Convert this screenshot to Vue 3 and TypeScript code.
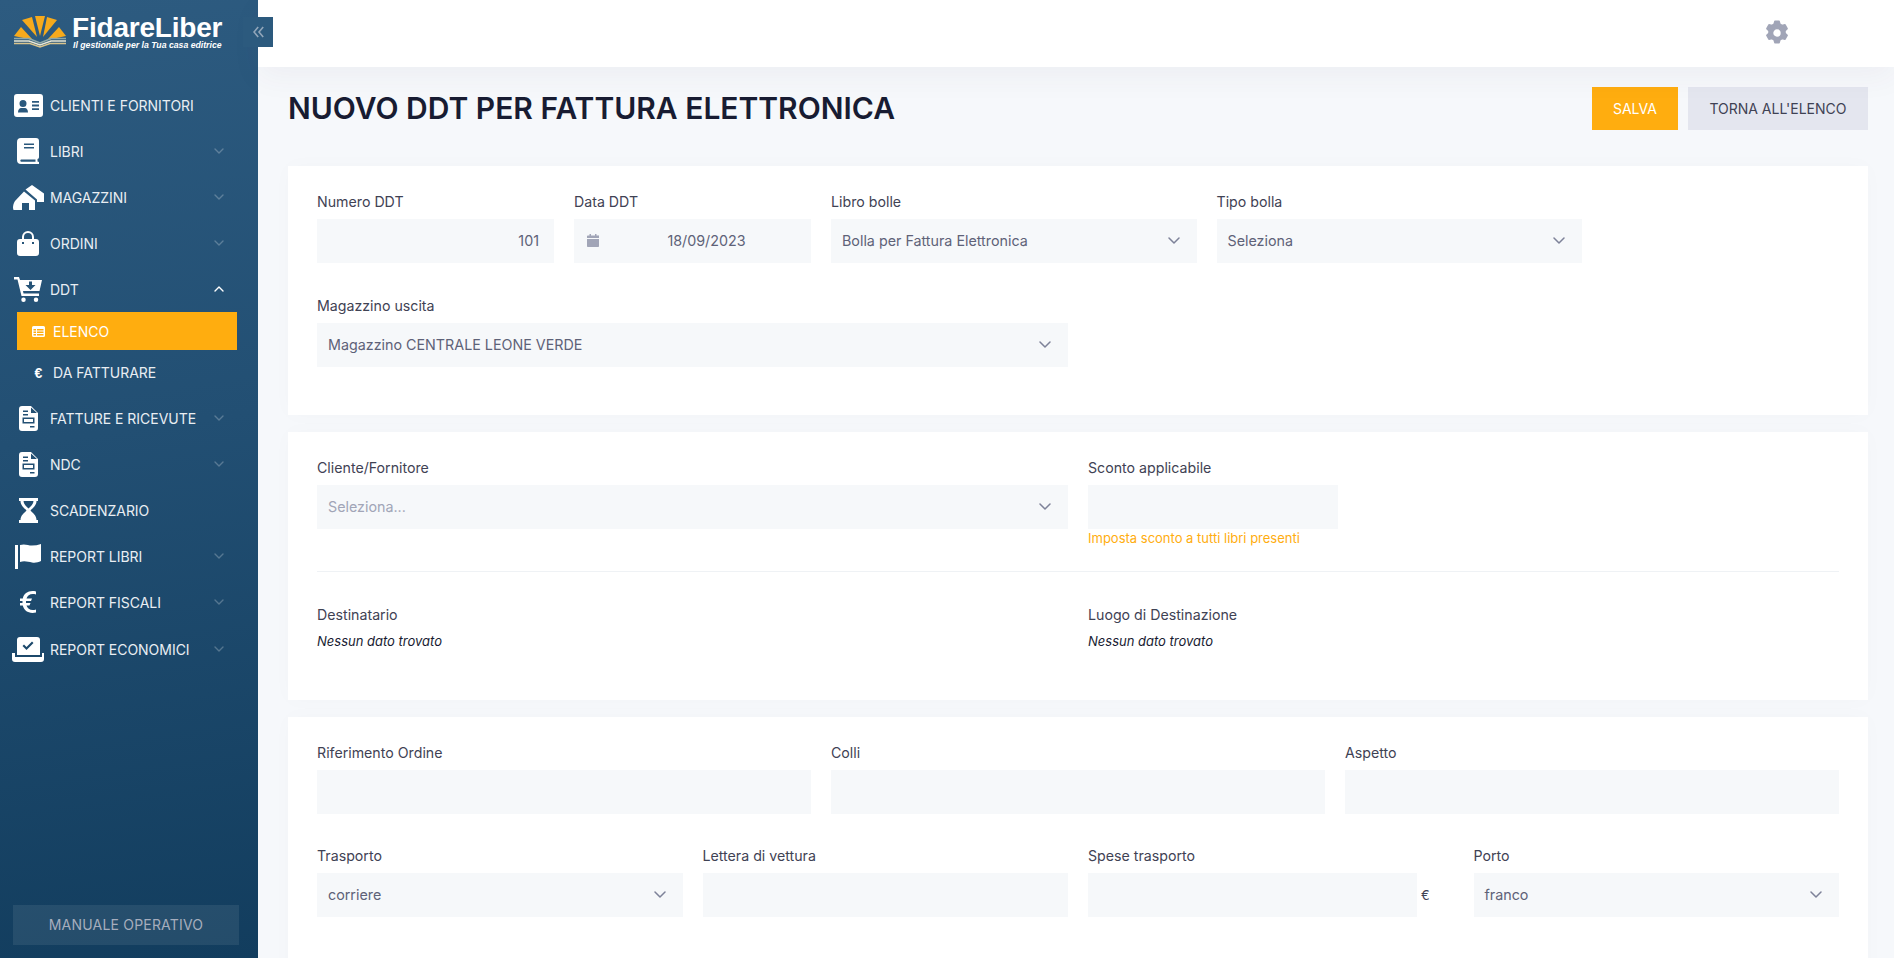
<template>
  <div class="layout">
    <aside class="aside">
      <div class="brand">
        <svg class="brand-mark" width="56" height="36" viewBox="13 14 56 36">
          <polygon points="35,16 45,16 40,36" fill="#f6aa1c" />
          <polygon points="22,20 32,17 37,37" fill="#f6aa1c" />
          <polygon points="47,17 57,20 43,37" fill="#f6aa1c" />
          <polygon points="14,36 21,27 33,40" fill="#f6aa1c" />
          <polygon points="59,27 66,36 47,40" fill="#f6aa1c" />
          <path d="M14 38.5H29L40 43L51 38.5H66" fill="none" stroke="#8fa9a8" stroke-width="1.6" />
          <path d="M14 41H29L40 45L51 41H66" fill="none" stroke="#e8e6d4" stroke-width="1.6" />
          <path d="M14 43.5H30L40 47L50 43.5H66" fill="none" stroke="#d9c48c" stroke-width="1.6" />
        </svg>
        <div class="brand-text">
          <div class="brand-name">FidareLiber</div>
          <div class="brand-sub">Il gestionale per la Tua casa editrice</div>
        </div>
      </div>

      <nav class="menu">
        <template v-for="item in menu" :key="item.label">
          <div class="menu-row">
            <span class="menu-icon">
              <svg :width="item.w" :height="item.h" :viewBox="`0 0 ${item.w} ${item.h}`">
                <path :d="item.d" fill="#fff" fill-rule="evenodd" />
              </svg>
            </span>
            <span class="menu-label">{{ item.label }}</span>
            <svg v-if="item.arrow" class="menu-arrow" :class="{ open: item.open }" width="10" height="6" viewBox="0 0 10 6">
              <path d="M1 1l4 4 4-4" fill="none" stroke="currentColor" stroke-width="1.4" stroke-linecap="round" stroke-linejoin="round" />
            </svg>
          </div>
          <template v-if="item.open">
            <div class="sub-row active">
              <svg width="13" height="11" viewBox="0 0 13 11">
                <path fill="#fff" fill-rule="evenodd" d="M1.5 0h10A1.5 1.5 0 0 1 13 1.5v8a1.5 1.5 0 0 1-1.5 1.5h-10A1.5 1.5 0 0 1 0 9.5v-8A1.5 1.5 0 0 1 1.5 0zM1.5 3v1.5h2.5V3zM5 3v1.5h6.5V3zM1.5 5.5V7h2.5V5.5zM5 5.5V7h6.5V5.5zM1.5 8v1.5h2.5V8zM5 8v1.5h6.5V8z" />
              </svg>
              <span>ELENCO</span>
            </div>
            <div class="sub-row second">
              <span class="euro-small">€</span>
              <span>DA FATTURARE</span>
            </div>
          </template>
        </template>
      </nav>

      <div class="manual">MANUALE OPERATIVO</div>
    </aside>

    <div class="main">
      <header class="topbar">
        <button class="collapse">
          <svg width="11" height="12" viewBox="0 0 11 12">
            <path d="M5.2 1L1 6l4.2 5M10.2 1L6 6l4.2 5" fill="none" stroke="#92a6ba" stroke-width="1.6" />
          </svg>
        </button>
        <svg class="gear" width="24" height="26" viewBox="0 0 24 26">
          <path fill="#a1a5b7" stroke="#a1a5b7" stroke-width="1.6" stroke-linejoin="round" fill-rule="evenodd" d="M9.9 1.4h4.2l.8 2.9 2.2 1.2 2.9-.7 2.1 3.8-2.1 2.1v2.6l2.1 2.1-2.1 3.8-2.9-.7-2.2 1.2-.8 2.9H9.9l-.8-2.9-2.2-1.2-2.9.7-2.1-3.8 2.1-2.1v-2.6L1.9 8.6 4 4.8l2.9.7 2.2-1.2zM12 8.5a4.5 4.5 0 1 0 0 9 4.5 4.5 0 0 0 0-9z" />
        </svg>
      </header>

      <main class="content">
        <div class="page-head">
          <h1>NUOVO DDT PER FATTURA ELETTRONICA</h1>
          <div class="actions">
            <button class="btn btn-save">SALVA</button>
            <button class="btn btn-back">TORNA ALL'ELENCO</button>
          </div>
        </div>

        <section class="card card-a">
          <div class="grid">
            <div class="field c2">
              <label>Numero DDT</label>
              <input class="input right" value="101" />
            </div>
            <div class="field c2">
              <label>Data DDT</label>
              <div class="input date">
                <svg width="12" height="13" viewBox="0 0 12 13">
                  <path fill="#a1a5b7" d="M2.5 0h1.5v1.5h4V0h1.5v1.5h1.2A.8.8 0 0 1 12 2.3V4H0V2.3a.8.8 0 0 1 .8-.8h1.7zM0 5h12v7.2a.8.8 0 0 1-.8.8H.8a.8.8 0 0 1-.8-.8z" />
                </svg>
                <span>18/09/2023</span>
              </div>
            </div>
            <div class="field c3">
              <label>Libro bolle</label>
              <div class="input select">
                <span>Bolla per Fattura Elettronica</span>
                <svg class="chev" width="12" height="7" viewBox="0 0 12 7"><path d="M1 1l5 5 5-5" /></svg>
              </div>
            </div>
            <div class="field c3">
              <label>Tipo bolla</label>
              <div class="input select">
                <span>Seleziona</span>
                <svg class="chev" width="12" height="7" viewBox="0 0 12 7"><path d="M1 1l5 5 5-5" /></svg>
              </div>
            </div>
            <div class="field c6">
              <label>Magazzino uscita</label>
              <div class="input select">
                <span>Magazzino CENTRALE LEONE VERDE</span>
                <svg class="chev" width="12" height="7" viewBox="0 0 12 7"><path d="M1 1l5 5 5-5" /></svg>
              </div>
            </div>
          </div>
        </section>

        <section class="card card-b">
          <div class="grid">
            <div class="field c6">
              <label>Cliente/Fornitore</label>
              <div class="input select placeholder">
                <span>Seleziona...</span>
                <svg class="chev" width="12" height="7" viewBox="0 0 12 7"><path d="M1 1l5 5 5-5" /></svg>
              </div>
            </div>
            <div class="field c6">
              <label>Sconto applicabile</label>
              <input class="input discount" />
              <a class="hint">Imposta sconto a tutti libri presenti</a>
            </div>
          </div>
          <div class="divider"></div>
          <div class="grid">
            <div class="field c6">
              <label>Destinatario</label>
              <em class="empty">Nessun dato trovato</em>
            </div>
            <div class="field c6">
              <label>Luogo di Destinazione</label>
              <em class="empty">Nessun dato trovato</em>
            </div>
          </div>
        </section>

        <section class="card card-c">
          <div class="grid">
            <div class="field c4">
              <label>Riferimento Ordine</label>
              <input class="input" />
            </div>
            <div class="field c4">
              <label>Colli</label>
              <input class="input" />
            </div>
            <div class="field c4">
              <label>Aspetto</label>
              <input class="input" />
            </div>
            <div class="field c3">
              <label>Trasporto</label>
              <div class="input select">
                <span>corriere</span>
                <svg class="chev" width="12" height="7" viewBox="0 0 12 7"><path d="M1 1l5 5 5-5" /></svg>
              </div>
            </div>
            <div class="field c3">
              <label>Lettera di vettura</label>
              <input class="input" />
            </div>
            <div class="field c3">
              <label>Spese trasporto</label>
              <div class="with-unit">
                <input class="input" />
                <span class="unit">€</span>
              </div>
            </div>
            <div class="field c3">
              <label>Porto</label>
              <div class="input select">
                <span>franco</span>
                <svg class="chev" width="12" height="7" viewBox="0 0 12 7"><path d="M1 1l5 5 5-5" /></svg>
              </div>
            </div>
          </div>
        </section>
      </main>
    </div>
  </div>
</template>

<script setup lang="ts">
interface MenuItem {
  label: string
  w: number
  h: number
  d: string
  arrow?: boolean
  open?: boolean
}

const docIcon =
  'M3 0H12L19 7V22A3 3 0 0 1 16 25H3A3 3 0 0 1 0 22V3A3 3 0 0 1 3 0ZM12 1.5V7H18ZM4 4.5V6H9V4.5ZM4 8V9.5H9V8ZM3.5 11.5V17.5H15.5V11.5ZM5 13H14V16H5ZM11 20V21.5H15.5V20Z'

const menu: MenuItem[] = [
  {
    label: 'CLIENTI E FORNITORI',
    w: 29,
    h: 23,
    d: 'M3 0H26A3 3 0 0 1 29 3V20A3 3 0 0 1 26 23H3A3 3 0 0 1 0 20V3A3 3 0 0 1 3 0ZM9 6A3.5 3.5 0 1 0 9 13A3.5 3.5 0 0 0 9 6ZM4 18.5H14C14 15.5 12.5 14 11 14H7C5.5 14 4 15.5 4 18.5ZM18 7V8.8H25V7ZM18 10.6V12.4H25V10.6ZM18 14.2V16H25V14.2Z',
  },
  {
    label: 'LIBRI',
    w: 22,
    h: 26,
    arrow: true,
    d: 'M4 0H19A3 3 0 0 1 22 3V19A2 2 0 0 1 20.5 21V23.5L22 24V26H4A4 4 0 0 1 0 22V4A4 4 0 0 1 4 0ZM7 5.5V7H17V5.5ZM7 9V10.5H17V9ZM4 21.5A1.5 1.5 0 0 0 4 23.8H18.5V21.5Z',
  },
  {
    label: 'MAGAZZINI',
    w: 31,
    h: 25,
    arrow: true,
    d: 'M12.5 4.5L19 0L31 8.5V17H24V14.5L12.5 4.5ZM11 6.5L22 15.5V25H16V18H9V25H0.5L0 23C0 21 0.5 18 2 16Z',
  },
  {
    label: 'ORDINI',
    w: 22,
    h: 25,
    arrow: true,
    d: 'M11 0A6 6 0 0 1 17 6V8H19A3 3 0 0 1 22 11V22A3 3 0 0 1 19 25H3A3 3 0 0 1 0 22V11A3 3 0 0 1 3 8H5V6A6 6 0 0 1 11 0ZM11 2A4 4 0 0 0 7 6V8H15V6A4 4 0 0 0 11 2ZM5 11V13H7V11ZM15 11V13H17V11Z',
  },
  {
    label: 'DDT',
    w: 28,
    h: 25,
    arrow: true,
    open: true,
    d: 'M0 0H5L6 3H28L25.5 14H9L9.5 16.5H25V19H7.5L3.5 2.5H0ZM15 4.5V8H11.5L16.5 13L21.5 8H18V4.5ZM9.5 20.5A2.2 2.2 0 1 1 9.5 25A2.2 2.2 0 0 1 9.5 20.5ZM22 20.5A2.2 2.2 0 1 1 22 25A2.2 2.2 0 0 1 22 20.5Z',
  },
  { label: 'FATTURE E RICEVUTE', w: 19, h: 25, arrow: true, d: docIcon },
  { label: 'NDC', w: 19, h: 25, arrow: true, d: docIcon },
  {
    label: 'SCADENZARIO',
    w: 19,
    h: 25,
    d: 'M0 0H19V3H17.5C17.5 8 13 10.5 11.5 12.5C13 14.5 17.5 17 17.5 22H19V25H0V22H1.5C1.5 17 6 14.5 7.5 12.5C6 10.5 1.5 8 1.5 3H0ZM4.5 3C4.5 6 7 8 9.5 10.5C12 8 14.5 6 14.5 3Z',
  },
  {
    label: 'REPORT LIBRI',
    w: 26,
    h: 25,
    arrow: true,
    d: 'M0 1H3V25H0ZM5 1C10 -0.5 13 1.5 17 1.5C20 1.5 23 1 26 0V17C23 18.5 20 19 17 18.5C13 18 10 16.5 5 18Z',
  },
  {
    label: 'REPORT FISCALI',
    w: 16,
    h: 22,
    arrow: true,
    d: 'M16 0.5V3.5C11 2 7.5 4 6.5 7.5H12L11 10H6V12H10.5L9.5 14.5H6.5C7.5 18 11 20 16 18.5V21.5C9 23 4 20 2.8 14.5H0V12H2.5V10H0V7.5H2.8C4 2 9 -1 16 0.5Z',
  },
  {
    label: 'REPORT ECONOMICI',
    w: 32,
    h: 25,
    arrow: true,
    d: 'M8 0H25A3 3 0 0 1 28 3V18H5V3A3 3 0 0 1 8 0ZM21.5 6L14.5 13L10.5 9L12 7.5L14.5 10L20 4.5ZM0 16H3V20H30V16H32V22A3 3 0 0 1 29 25H3A3 3 0 0 1 0 22Z',
  },
]
</script>

<style>
html,
body {
  margin: 0;
  height: 100%;
  overflow: hidden;
}
</style>

<style scoped>
.layout {
  display: flex;
  height: 100vh;
  overflow: hidden;
  font-family: Inter, "Liberation Sans", sans-serif;
  font-size: 14px;
  background: #f6f8fb;
}

.aside {
  width: 258px;
  flex: none;
  display: flex;
  flex-direction: column;
  background: linear-gradient(172deg, #2d5b80 0%, #224f73 45%, #123d5e 100%);
}

.brand {
  height: 82px;
  flex: none;
  display: flex;
  align-items: flex-start;
  box-sizing: border-box;
  padding: 14px 0 0 13px;
}

.brand-mark {
  flex: none;
  margin-right: 3px;
}

.brand-text {
  padding-top: 2px;
}

.brand-name {
  font-family: "Liberation Sans", sans-serif;
  font-weight: 700;
  font-size: 28px;
  letter-spacing: -0.2px;
  line-height: 24px;
  color: #fff;
}

.brand-sub {
  margin-left: 1px;
  font-family: "Liberation Sans", sans-serif;
  font-weight: 700;
  font-style: italic;
  font-size: 8.7px;
  line-height: 10px;
  color: #fff;
  white-space: nowrap;
}

.menu-row {
  height: 46px;
  display: flex;
  align-items: center;
  padding-left: 12px;
  color: #e9eef3;
  letter-spacing: -0.03px;
}

.menu-row:last-child {
  margin-top: 1px;
}

.menu-icon {
  width: 32px;
  margin-right: 6px;
  display: flex;
  justify-content: center;
  align-items: center;
  flex: none;
}

.menu-label {
  flex: 1;
  white-space: nowrap;
}

.menu-arrow {
  margin-right: 34px;
  color: rgba(255, 255, 255, 0.25);
}

.menu-arrow.open {
  color: #fff;
  transform: rotate(180deg);
}

.sub-row {
  margin-left: 17px;
  width: 220px;
  height: 38px;
  display: flex;
  align-items: center;
  padding-left: 15px;
  gap: 8px;
  box-sizing: border-box;
  color: #e9eef3;
}

.sub-row.active {
  background: #ffad0f;
  color: #fff;
}

.sub-row.second {
  height: 45px;
}

.euro-small {
  width: 13px;
  text-align: center;
  font-family: "Liberation Sans", sans-serif;
  font-weight: 700;
  font-size: 14px;
  color: #fff;
}

.manual {
  margin: auto 19px 13px 13px;
  height: 40px;
  line-height: 40px;
  text-align: center;
  letter-spacing: 0.2px;
  background: rgba(255, 255, 255, 0.08);
  color: #a6adbd;
}

.main {
  flex: 1;
  min-width: 0;
  display: flex;
  flex-direction: column;
}

.topbar {
  height: 67px;
  flex: none;
  position: relative;
  z-index: 1;
  display: flex;
  align-items: center;
  justify-content: flex-end;
  padding-right: 105px;
  background: #fff;
  box-shadow: 0 10px 30px rgba(82, 63, 105, 0.05);
}

.collapse {
  position: absolute;
  left: -15px;
  top: 17px;
  width: 30px;
  height: 30px;
  padding: 0;
  border: 0;
  background: #2c5a7e;
  display: flex;
  align-items: center;
  justify-content: center;
}

.gear {
  margin-top: -1px;
}

.content {
  padding: 20px 26px 0 30px;
}

.page-head {
  display: flex;
  align-items: center;
  justify-content: space-between;
  height: 43px;
  margin-bottom: 36px;
}

h1 {
  margin: -2px 0 0;
  font-size: 30px;
  font-weight: 600;
  color: #181c32;
}

.actions {
  display: flex;
  gap: 10px;
}

.btn {
  height: 43px;
  border: 0;
  font-family: inherit;
  font-size: 14px;
}

.btn-save {
  padding: 0 21px;
  background: #ffad0f;
  color: #fff;
}

.btn-back {
  padding: 0 21.5px;
  background: #e4e6ef;
  color: #3f4254;
}

.card {
  background: #fff;
  padding: 26px 29px 0;
  margin-bottom: 17px;
  box-sizing: border-box;
  box-shadow: 0 0 20px rgba(76, 87, 125, 0.02);
}

.card-a {
  height: 249px;
}

.card-b {
  height: 268px;
}

.card-c {
  height: 300px;
}

.card-c .grid {
  row-gap: 32px;
}

.grid {
  display: grid;
  grid-template-columns: repeat(12, minmax(0, 1fr));
  column-gap: 20px;
  row-gap: 33px;
}

.c2 {
  grid-column: span 2;
}

.c3 {
  grid-column: span 3;
}

.c4 {
  grid-column: span 4;
}

.c6 {
  grid-column: span 6;
}

.field {
  display: flex;
  flex-direction: column;
  min-width: 0;
}

label {
  height: 20px;
  line-height: 20px;
  margin-bottom: 7px;
  font-size: 14.2px;
  font-weight: 400;
  color: #3f4254;
}

.input {
  height: 44px;
  width: 100%;
  box-sizing: border-box;
  border: 0;
  outline: 0;
  padding: 0 11px 1px;
  background: #f6f8fa;
  font-family: inherit;
  font-size: 14.3px;
  color: #5e6278;
}

.right {
  text-align: right;
  padding-right: 15px;
}

.date {
  display: flex;
  align-items: center;
  padding: 0 12px 1px 13px;
}

.date span {
  flex: 1;
  text-align: center;
  padding-left: 15px;
}

.select {
  display: flex;
  align-items: center;
  justify-content: space-between;
  padding-right: 17px;
}

.placeholder {
  color: #a1a5b7;
}

.chev {
  fill: none;
  stroke: #7e8299;
  stroke-width: 1.5;
  stroke-linecap: round;
  stroke-linejoin: round;
}

.discount {
  width: 250px;
}

.hint {
  margin-top: 1px;
  font-size: 13px;
  line-height: 17px;
  color: #ffad0f;
}

.divider {
  height: 1px;
  background: #eff2f5;
  margin: 24px 0 33px;
}

.empty {
  font-size: 13px;
  line-height: 18px;
  color: #181c32;
}

.with-unit {
  position: relative;
}

.with-unit .input {
  width: 329px;
}

.unit {
  position: absolute;
  left: 333px;
  top: 14px;
  font-size: 13px;
  color: #3f4254;
}
</style>
